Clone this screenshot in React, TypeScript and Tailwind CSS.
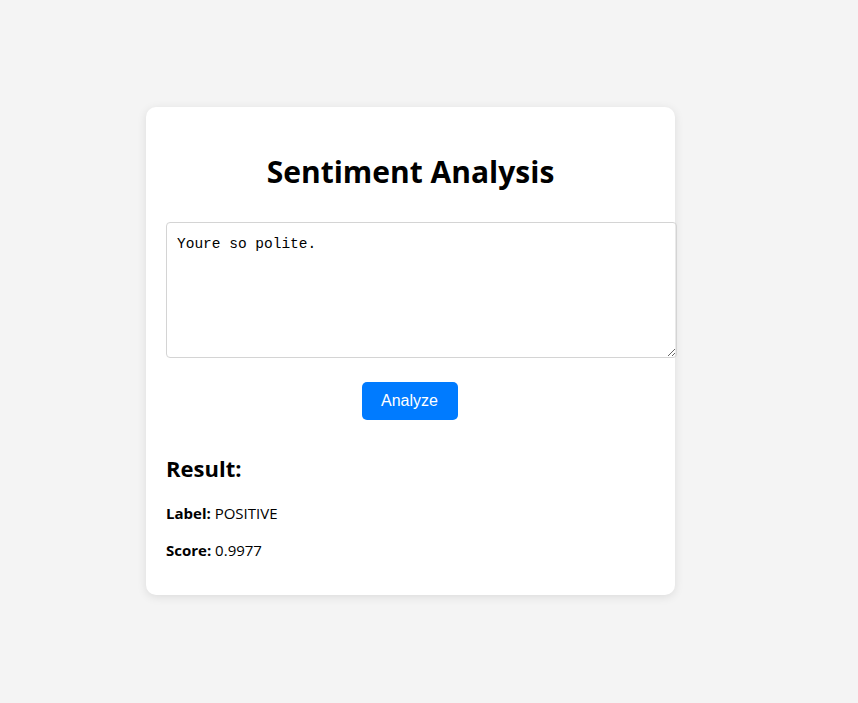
import { useState } from 'react';

export default function App() {
  const [text, setText] = useState('Youre so polite.');

  return (
    <div className="min-h-[703px] bg-[#f4f4f4] pt-[107px] pl-[146px]" style={{ fontFamily: '"Open Sans", "Noto Sans", sans-serif' }}>
      <div className="w-[529px] rounded-[10px] bg-white px-5 pt-5 pb-[35px] shadow-[0_2px_10px_rgba(0,0,0,0.1)]">
        <h1 className="mt-[25px] text-center text-[30px] leading-[40px] font-bold text-black">Sentiment Analysis</h1>

        <textarea
          value={text}
          onChange={(e) => setText(e.target.value)}
          className="mt-[30px] box-content block h-[112px] w-[489px] rounded-[4px] border border-[#d4d4d4] px-[10px] pt-[12px] pb-[10px] text-[14.5px] leading-[18px] text-black"
          style={{ fontFamily: '"Liberation Mono", monospace' }}
        />

        <div className="mt-6 flex justify-center">
          <button
            className="-ml-[2px] h-[38px] w-[96px] rounded-[5px] bg-[#007bff] text-[16px] text-white"
            style={{ fontFamily: '"Liberation Sans", Arial, sans-serif' }}
          >
            Analyze
          </button>
        </div>

        <h3 className="mt-[34px] text-[22px] leading-[28px] font-bold text-black">Result:</h3>
        <p className="mt-[21px] text-[15px] leading-5 text-black">
          <span className="font-bold">Label:</span> POSITIVE
        </p>
        <p className="mt-[17px] text-[15px] leading-5 text-black">
          <span className="font-bold">Score:</span> 0.9977
        </p>
      </div>
    </div>
  );
}
